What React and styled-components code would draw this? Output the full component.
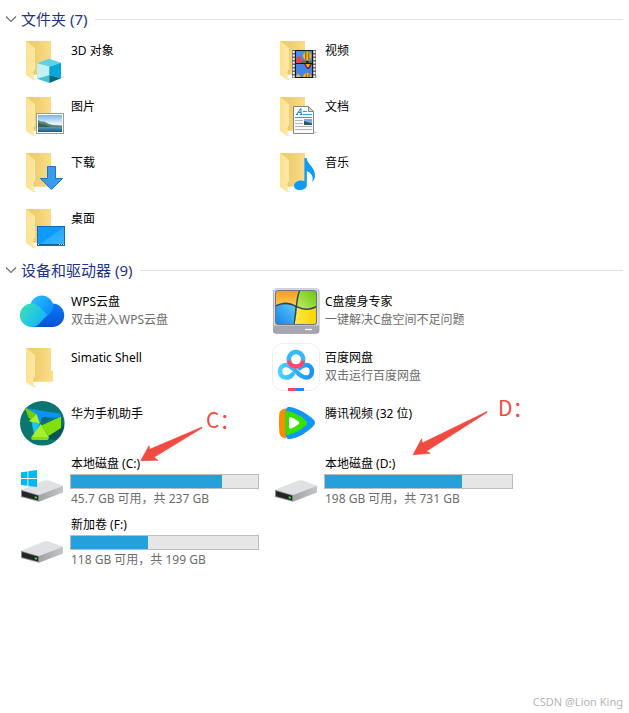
import { useState } from "react";
import styled, { createGlobalStyle } from "styled-components";

const colors = {
  heading: "#1e3287",
  text: "#000",
  muted: "#6d6d6d",
  line: "#e2e2e2",
  fill: "#26a0da",
  track: "#e6e6e6",
  mark: "#f04a41",
};

const GlobalStyle = createGlobalStyle`
  * {
    box-sizing: border-box;
  }

  body {
    margin: 0;
    background: #fff;
    color: ${colors.text};
    font-family: "Noto Sans", "Noto Sans CJK SC", sans-serif;
    font-size: 12px;
  }
`;

const Page = styled.div`
  display: flex;
  flex-direction: column;
  min-height: 100vh;
  padding: 8px 6px 0 5px;
`;

const Group = styled.section`
  margin-bottom: 7px;
`;

const GroupTitle = styled.h2`
  margin: 0 0 6px;
  font-size: 15px;
  font-weight: 400;
`;

const GroupToggle = styled.button`
  display: flex;
  align-items: center;
  width: 100%;
  height: 22px;
  padding: 0;
  border: 0;
  background: none;
  color: ${colors.heading};
  font: inherit;
  line-height: 22px;
  text-align: left;
  cursor: pointer;

  &::after {
    content: "";
    flex: 1;
    height: 1px;
    margin-left: 7px;
    background: ${colors.line};
  }
`;

const Chevron = styled.svg`
  width: 12px;
  height: 12px;
  margin-right: 4px;
  transform: ${(props) => (props.$open ? "none" : "rotate(-90deg)")};
`;

const Tiles = styled.ul`
  display: grid;
  grid-template-columns: repeat(auto-fill, 254px);
  gap: 8px 0;
  margin: 0;
  padding: 0 0 0 13px;
  list-style: none;
`;

const TileItem = styled.li`
  position: relative;
`;

const Tile = styled.button`
  display: flex;
  align-items: flex-start;
  gap: 4px;
  width: 100%;
  padding: 0;
  border: 0;
  background: none;
  color: inherit;
  font: inherit;
  text-align: left;
  cursor: default;
`;

const Icon = styled.svg`
  flex: none;
  width: 48px;
  height: 48px;
`;

const TileText = styled.span`
  display: flex;
  flex-direction: column;
  flex: 1;
  padding-top: ${(props) => (props.$drive ? 0 : 6)}px;
  line-height: 18px;
`;

const Name = styled.span`
  padding-left: 1px;
`;

const Detail = styled.span`
  padding-left: 1px;
  color: ${colors.muted};
`;

const Meter = styled.span`
  display: block;
  width: 189px;
  height: 15px;
  margin: 1px 0;
  border: 1px solid #bcbcbc;
  background: ${colors.track};
`;

const MeterFill = styled.span`
  display: block;
  height: 100%;
  background: ${colors.fill};
`;

/* hand-drawn marks that lie over the drives */
const MarkArrow = styled.svg`
  position: absolute;
  left: 0;
  top: 0;
  width: 1px;
  height: 1px;
  overflow: visible;
  pointer-events: none;
`;

const MarkText = styled.span`
  position: absolute;
  left: ${(props) => props.$x}px;
  top: ${(props) => props.$y}px;
  color: ${colors.mark};
  font-family: "Noto Sans CJK SC", sans-serif;
  font-size: 21px;
  line-height: 24px;
  white-space: nowrap;
`;

const Credit = styled.footer`
  margin-top: auto;
  padding-bottom: 2px;
  color: #b4b4b4;
  font-size: 11px;
  line-height: 18px;
  text-align: right;
`;

function Folder({ children }) {
  return (
    <Icon viewBox="0 0 48 48" aria-hidden="true">
      <defs>
        <linearGradient id="folderBack" x1="0" y1="0" x2="1" y2="0">
          <stop offset="0.3" stopColor="#efcd70" />
          <stop offset="1" stopColor="#fbdf8a" />
        </linearGradient>
        <linearGradient id="folderFlap" x1="0" y1="0" x2="1" y2="0">
          <stop offset="0" stopColor="#fde092" />
          <stop offset="1" stopColor="#ffe9a4" />
        </linearGradient>
      </defs>
      <path d="M15 44.6 L18.5 43.5 L16 42 Z" fill="#e9e9e9" />
      <path d="M34 38.7 L38 37.5 L35 37 Z" fill="#ececec" />
      <path d="M8 5 H33 V27 L35 28.5 V38 L34 38.7 H8 Z" fill="url(#folderBack)" />
      <path d="M8 5 L17 12 V33 L15.8 34.5 V44.6 L8 39 Z" fill="url(#folderFlap)" />
      <path d="M15.8 38.2 H17 V34 L15.8 35.5 Z" fill="#e9c468" />
      {children}
    </Icon>
  );
}

function ObjectsIcon() {
  return (
    <Folder>
      <path d="M31.3 47 L47 41 L43 39 Z" fill="#e4e4e4" />
      <path d="M31 22.7 L43 26.7 L31.3 30.7 L19 27.3 Z" fill="#5bd2e6" />
      <path d="M19 27.3 L31.3 30.7 V39 L19 42.7 Z" fill="#c3f0f4" />
      <path d="M43 26.7 L31.3 30.7 V39 L43 42.3 Z" fill="#06a7dc" />
      <path d="M19 42.7 L31.3 39 V47 Z" fill="#41c3d5" />
      <path d="M43 42.3 L31.3 39 V47 Z" fill="#006b7e" />
    </Folder>
  );
}

function PicturesIcon() {
  return (
    <Folder>
      <defs>
        <linearGradient id="sky" x1="0" y1="0" x2="0" y2="1">
          <stop offset="0" stopColor="#79b4ef" />
          <stop offset="0.5" stopColor="#e6f3fc" />
        </linearGradient>
        <linearGradient id="lake" x1="0" y1="0" x2="0" y2="1">
          <stop offset="0" stopColor="#6ba3bd" />
          <stop offset="1" stopColor="#175a91" />
        </linearGradient>
      </defs>
      <rect x="18.5" y="21.5" width="27" height="20" fill="#fff" stroke="#9c9c9c" />
      <rect x="20" y="23" width="24" height="17" fill="url(#sky)" />
      <rect x="20" y="34" width="24" height="6" fill="url(#lake)" />
      <path d="M20 28 L23 29.5 L26 29.5 L31 32 L35 33 L44 33.5 V35 H20 Z" fill="#5d8574" />
      <path d="M20 31 L26 32.5 L33 35 H20 Z" fill="#3a6258" />
    </Folder>
  );
}

function DownloadsIcon() {
  return (
    <Folder>
      <path
        d="M29.5 18.5 H37.5 V30.5 H44.5 L33.4 41.6 L22.3 30.5 H29.5 Z"
        fill="#3a9bed"
        stroke="#1876c9"
      />
    </Folder>
  );
}

function DesktopIcon() {
  return (
    <Folder>
      <defs>
        <linearGradient id="desk" x1="0" y1="0" x2="1" y2="1">
          <stop offset="0" stopColor="#109cff" />
          <stop offset="0.5" stopColor="#0c9bff" />
          <stop offset="0.52" stopColor="#29adff" />
          <stop offset="1" stopColor="#38b4ff" />
        </linearGradient>
      </defs>
      <rect x="19.5" y="22.5" width="27" height="19" fill="url(#desk)" stroke="#0d6db5" />
      <path d="M20 40.5 H46" stroke="#0765a8" />
      <path d="M20 40.5 H21 M41 40.5 H42 M43 40.5 H44 M45 40.5 H46" stroke="#fff" />
    </Folder>
  );
}

function VideosIcon() {
  return (
    <Folder>
      <path d="M44 42 L47 40.5 L44 39 Z" fill="#ddd" />
      <rect x="20" y="14" width="24" height="28" fill="#6a6a6a" />
      <path d="M21.7 15 V42 M42.4 15 V42" stroke="#f3f3f3" strokeWidth="2" strokeDasharray="2 1.5" />
      <rect x="23" y="14" width="18" height="28" fill="#15171c" />
      <rect x="24" y="15" width="16" height="12" fill="#4b8de4" />
      <rect x="24" y="28" width="16" height="13" fill="#4585e0" />
      <path d="M24 22 L27 20 L31 24 L40 25 V27 H24 Z" fill="#d64b5b" />
      <path d="M31 25 H40 V27 H29 Z" fill="#3e8038" />
      <circle cx="35.2" cy="20" r="4.2" fill="#f2bd1b" />
      <path d="M33.8 16 V24 M36.8 16.3 V23.8" stroke="#7a4f1a" />
      <path d="M34 25 H36.6 V27 H34 Z" fill="#3a1b14" />
      <path d="M32 28 H40 L37 33 H35 Z" fill="#7d2540" />
      <path d="M34 28 H38 L36.5 31 H35 Z" fill="#e9b51b" />
      <path d="M31 41 A4.3 4.3 0 0 1 39.6 41 Z" fill="#f2bd1b" />
      <path d="M34.2 37.5 V41 M37 37.5 V41" stroke="#7a4f1a" />
      <path d="M24 40 L26 37.5 L29 41 H24 Z" fill="#e0bd45" />
    </Folder>
  );
}

function DocumentsIcon() {
  return (
    <Folder>
      <path d="M42 42 L46 40.5 L42 39 Z" fill="#ddd" />
      <path d="M21.5 14.5 H36.5 L41.5 19.5 V41.5 H21.5 Z" fill="#fafafa" stroke="#858585" />
      <path d="M36.5 14.5 V19.5 H41.5 Z" fill="#dcdcdc" stroke="#858585" />
      <path
        d="M24 22.5 H26 M24.8 22.3 L28.8 16.4 L29.3 22.3 M26 20.4 H29 M28 22.5 H30.5"
        fill="none"
        stroke="#1583d2"
      />
      <path d="M31 19.5 H35 M31 22.5 H40 M23 25.5 H40" stroke="#3b9de0" />
      <path d="M23 28.5 H31 M23 31.5 H31 M23 34.5 H40 M23 37.5 H40" stroke="#b3b3b3" />
      <rect x="32" y="27" width="8" height="6" fill="#79aee2" />
      <path d="M32 29 L40 31.5 V33 H32 Z" fill="#2c5a5f" />
    </Folder>
  );
}

function MusicIcon() {
  return (
    <Folder>
      <path
        d="M32.4 10 H34.6 C35 16 43 19 43 27.5 C43 30.5 41.7 32.3 40.3 34 C41.8 27.5 38.5 24.5 34.8 23 V37 C34.8 40 31.5 42 27.5 42 C24 42 22 40.2 22 37.8 C22 35 25 32.5 29 32.5 C30.5 32.5 31.6 32.8 32.4 33.2 Z"
        fill="#0d9bf5"
      />
    </Folder>
  );
}

function WpsIcon() {
  return (
    <Icon viewBox="0 0 48 48" aria-hidden="true">
      <defs>
        <linearGradient id="wpsRight" x1="0" y1="0" x2="0" y2="1">
          <stop offset="0" stopColor="#0a7df0" />
          <stop offset="1" stopColor="#0550d8" />
        </linearGradient>
        <linearGradient id="wpsTop" x1="0" y1="0" x2="1" y2="1">
          <stop offset="0" stopColor="#28c8ff" />
          <stop offset="1" stopColor="#0a7dff" />
        </linearGradient>
        <linearGradient id="wpsLeft" x1="0" y1="0" x2="1" y2="0.6">
          <stop offset="0" stopColor="#3ee6b4" />
          <stop offset="1" stopColor="#12b4fb" />
        </linearGradient>
      </defs>
      <path d="M34.5 16.6 A11.7 11.7 0 0 1 34.5 40 H13 L24 22 Z" fill="url(#wpsRight)" />
      <path d="M12.5 17.5 A11.6 11.6 0 0 1 35.3 18.5 C35.3 22 34 24.5 31 27.5 L27 31 Z" fill="url(#wpsTop)" />
      <path
        d="M13.6 16.6 C17.5 16.6 20 18.4 22 20.5 L29.2 27.7 L21.5 36.5 C18.5 39.3 17 40 13.6 40 A11.7 11.7 0 0 1 13.6 16.6 Z"
        fill="url(#wpsLeft)"
      />
    </Icon>
  );
}

function CleanerIcon() {
  return (
    <Icon viewBox="0 0 48 48" aria-hidden="true">
      <defs>
        <linearGradient id="paneA" x1="0" y1="0" x2="0" y2="1">
          <stop offset="0" stopColor="#ff9a2c" />
          <stop offset="1" stopColor="#ffca45" />
        </linearGradient>
        <linearGradient id="paneB" x1="1" y1="0" x2="0" y2="1">
          <stop offset="0" stopColor="#6cc614" />
          <stop offset="1" stopColor="#c4ea63" />
        </linearGradient>
        <linearGradient id="paneC" x1="0" y1="1" x2="1" y2="0">
          <stop offset="0" stopColor="#1385e8" />
          <stop offset="1" stopColor="#5ec9fb" />
        </linearGradient>
        <linearGradient id="paneD" x1="0" y1="0" x2="1" y2="0">
          <stop offset="0" stopColor="#ffe94e" />
          <stop offset="1" stopColor="#f8d400" />
        </linearGradient>
        <clipPath id="screen">
          <rect x="4" y="4" width="40" height="33" rx="2" />
        </clipPath>
      </defs>
      <rect x="1" y="1.5" width="46.4" height="45.3" rx="3.5" fill="#90929c" />
      <rect x="1.5" y="1.5" width="45.4" height="42" rx="3" fill="#d8d9e0" />
      <path d="M1.5 38.5 H47 V43 Q47 46 44 46 H4.5 Q1.5 46 1.5 43 Z" fill="#a4a6b1" />
      <path d="M33 42.5 H40" stroke="#fff" strokeWidth="1.3" />
      <g clipPath="url(#screen)">
        <rect x="4" y="4" width="40" height="33" fill="#354557" />
        <path d="M4 4 H26.5 Q24.5 10 23.8 18.5 C17 14.5 11 14.5 4 18 Z" fill="url(#paneA)" />
        <path d="M28 4 H44 V19 C37 22.5 31 22 25.2 19 Q26 10 28 4 Z" fill="url(#paneB)" />
        <path d="M4 19.5 C11 16.3 17 16.5 23.3 20 Q22.7 28 21.5 37 H4 Z" fill="url(#paneC)" />
        <path d="M25 20.5 C31 23.7 37 23.8 44 20.8 V37 H22.8 Q24.3 28 25 20.5 Z" fill="url(#paneD)" />
      </g>
      <rect x="3.5" y="3.5" width="41" height="34" rx="2" fill="none" stroke="#6f7580" />
    </Icon>
  );
}

function BaiduIcon() {
  return (
    <Icon viewBox="0 0 48 48" aria-hidden="true">
      <defs>
        <linearGradient id="panBlue" x1="0" y1="0" x2="1" y2="0">
          <stop offset="0" stopColor="#4bd2ff" />
          <stop offset="1" stopColor="#1293ff" />
        </linearGradient>
      </defs>
      <rect x="0.5" y="0.5" width="47" height="47" rx="10" fill="#fff" stroke="#efefef" />
      <g fill="none" strokeWidth="4.5" strokeLinecap="round">
        <path
          d="M20.5 31.5 C18.5 33.8 17 34.6 14 34.6 C10 34.6 8 31.6 8 28.2 C8 24.7 10.5 22 14 22 C18 22 20 24.5 24 28.5 C28 32.5 30.5 34.6 34.3 34.6 C37.8 34.6 40 32 40 28.2 C40 24.7 37.5 22 34 22 C31.5 22 29.5 23.2 27.5 25.2"
          stroke="url(#panBlue)"
        />
        <path d="M17 18 A7.2 7.2 0 1 1 31 18" stroke="#35b9fb" />
        <path d="M16.9 17.5 A7.2 7.2 0 0 0 31.1 17.5" stroke="#ff4867" strokeLinecap="butt" />
      </g>
      <path d="M16 45 H24 V48 H16 Z" fill="#ff4364" />
      <path d="M24 45 H32 V48 H24 Z" fill="#1e86ff" />
    </Icon>
  );
}

function HuaweiIcon() {
  return (
    <Icon viewBox="0 0 48 48" aria-hidden="true">
      <circle cx="24.3" cy="24.3" r="22.3" fill="#0b7570" />
      <path d="M43 29 L46 24 A22.3 22.3 0 0 1 38 41 L30 40 L30.3 36.3 Z" fill="#07565a" />
      <path d="M8 9 L42.5 14.8 L42.5 17.5 L22 24.5 L18.7 15 Z" fill="#0a93f5" />
      <path d="M24 18 L37.5 19 L22.3 24.5 Z" fill="#0b6b78" />
      <path d="M6.7 8.3 L18.7 15 L13 20.5 L10.5 18.5 Z" fill="#6bd00a" />
      <path d="M13.5 22.8 L22 24.3 L16.3 36 Z" fill="#14c8f5" />
      <path d="M43 17.5 V29 L30.5 37 L23.5 26.5 Z" fill="#80df0c" />
      <path d="M18.7 15 L10.8 22.2 L22 24.5 Z" fill="#a8f030" />
      <path d="M22.7 25 L31 38.3 L29.5 41 L13.8 40.5 L13.5 38 Z" fill="#a5f02c" />
      <path d="M13.5 38 L31 38.3 L29.5 41 L13.8 40.5 Z" fill="#86dc16" />
    </Icon>
  );
}

function TencentIcon() {
  return (
    <Icon viewBox="0 0 48 48" aria-hidden="true">
      <path d="M14 9.5 C9 10 7.5 12 7.2 16 Q6.6 24 7.2 32 C7.5 37 9 38.5 14 39.5 Z" fill="#ff8a0a" />
      <path
        d="M18 8 C25 9 35 14.5 41 20 Q45 23.7 41 27.5 C35 33.5 26 39 18 40 C14.5 40.3 14 38 13.7 35 Q13 24 13.7 13 C14 9.5 14.5 7.6 18 8 Z"
        fill="#0d96fb"
      />
      <path
        d="M15.5 12 C22 13 29 17 34 21.7 Q36.3 24 34 26.3 C29 31 22 34.8 15.5 36 C13.7 36.3 13.3 35 13.2 32 Q12.7 24 13.2 15 C13.3 12.8 13.7 11.7 15.5 12 Z"
        fill="#38e000"
      />
      <path d="M18.6 18 Q23.5 20 26.8 22.7 Q28 23.9 26.8 25.1 Q23.5 28 18.6 29.7 Q17.2 30 17.1 28.5 Q16.8 24 17.1 19.2 Q17.2 17.7 18.6 18 Z" fill="#fff" />
    </Icon>
  );
}

function DriveIcon({ system }) {
  return (
    <Icon viewBox="0 0 48 48" aria-hidden="true">
      <defs>
        <linearGradient id="driveSide" x1="0" y1="0" x2="1" y2="0">
          <stop offset="0" stopColor="#a1a3a6" />
          <stop offset="1" stopColor="#c3c5c8" />
        </linearGradient>
      </defs>
      <path d="M3 34.7 L26 25.6 Q28.5 24.8 31 25.5 L45 30.7 L21 40 Z" fill="#e0e1e4" />
      <path d="M21 40 L45 30.7 V37.5 L21 46.8 Z" fill="url(#driveSide)" />
      <path d="M3 34.7 L21 40 V46.8 L3 42 Z" fill="#8d8f92" />
      <path d="M4 36 L20.2 40.8 V45.6 L4 41.2 Z" fill="#222426" />
      <path d="M16.7 41.3 L18.9 42 V43.8 L16.7 43.2 Z" fill="#30e84a" />
      {system && (
        <path
          d="M3 17.3 L9.5 16.4 V23 H3 Z M10.3 16.2 L19 15 V23 H10.3 Z M3 23.9 H9.5 V30.8 L3 29.9 Z M10.3 23.9 H19 V32 L10.3 30.9 Z"
          fill="#00b9f1"
        />
      )}
    </Icon>
  );
}

const folders = [
  { name: "3D 对象", icon: <ObjectsIcon /> },
  { name: "视频", icon: <VideosIcon /> },
  { name: "图片", icon: <PicturesIcon /> },
  { name: "文档", icon: <DocumentsIcon /> },
  { name: "下载", icon: <DownloadsIcon /> },
  { name: "音乐", icon: <MusicIcon /> },
  { name: "桌面", icon: <DesktopIcon /> },
];

const devices = [
  { name: "WPS云盘", detail: "双击进入WPS云盘", icon: <WpsIcon /> },
  { name: "C盘瘦身专家", detail: "一键解决C盘空间不足问题", icon: <CleanerIcon /> },
  { name: "Simatic Shell", icon: <Folder /> },
  { name: "百度网盘", detail: "双击运行百度网盘", icon: <BaiduIcon /> },
  { name: "华为手机助手", icon: <HuaweiIcon /> },
  { name: "腾讯视频 (32 位)", icon: <TencentIcon /> },
  {
    name: "本地磁盘 (C:)",
    detail: "45.7 GB 可用，共 237 GB",
    used: 81,
    icon: <DriveIcon system />,
    mark: {
      text: "C：",
      x: 188,
      y: -48,
      arrow: "M184 -28 L131.7 -5.7 L131 -9.3 L122.7 5.7 L140 5.3 L136 2.3 L184 -27 Z",
    },
  },
  {
    name: "本地磁盘 (D:)",
    detail: "198 GB 可用，共 731 GB",
    used: 73,
    icon: <DriveIcon />,
    mark: {
      text: "D：",
      x: 226,
      y: -60,
      arrow: "M215 -43.5 L150.3 -12 L149.7 -16.3 L141 -0.3 L158.3 -1.7 L154.3 -3.7 L215 -42.5 Z",
    },
  },
  {
    name: "新加卷 (F:)",
    detail: "118 GB 可用，共 199 GB",
    used: 41,
    icon: <DriveIcon />,
  },
];

function TileGroup({ title, items }) {
  const [open, setOpen] = useState(true);

  return (
    <Group>
      <GroupTitle>
        <GroupToggle type="button" aria-expanded={open} onClick={() => setOpen(!open)}>
          <Chevron viewBox="0 0 12 12" $open={open} aria-hidden="true">
            <path d="M1 3.5 L6 8.5 L11 3.5" fill="none" stroke="#6b6b6b" strokeWidth="1.2" />
          </Chevron>
          {title} ({items.length})
        </GroupToggle>
      </GroupTitle>
      {open && (
        <Tiles>
          {items.map(({ name, detail, used, icon, mark }) => (
            <TileItem key={name}>
              <Tile type="button">
                {icon}
                <TileText $drive={used !== undefined}>
                  <Name>{name}</Name>
                  {used !== undefined && (
                    <Meter role="meter" aria-label={name} aria-valuenow={used} aria-valuemin={0} aria-valuemax={100}>
                      <MeterFill style={{ width: `${used}%` }} />
                    </Meter>
                  )}
                  {detail && <Detail>{detail}</Detail>}
                </TileText>
              </Tile>
              {mark && (
                <>
                  <MarkArrow aria-hidden="true">
                    <path d={mark.arrow} fill={colors.mark} stroke={colors.mark} strokeWidth="0.6" strokeLinejoin="round" />
                  </MarkArrow>
                  <MarkText $x={mark.x} $y={mark.y}>
                    {mark.text}
                  </MarkText>
                </>
              )}
            </TileItem>
          ))}
        </Tiles>
      )}
    </Group>
  );
}

export default function App() {
  return (
    <>
      <GlobalStyle />
      <Page>
        <main>
          <TileGroup title="文件夹" items={folders} />
          <TileGroup title="设备和驱动器" items={devices} />
        </main>
        <Credit>CSDN @Lion King</Credit>
      </Page>
    </>
  );
}
